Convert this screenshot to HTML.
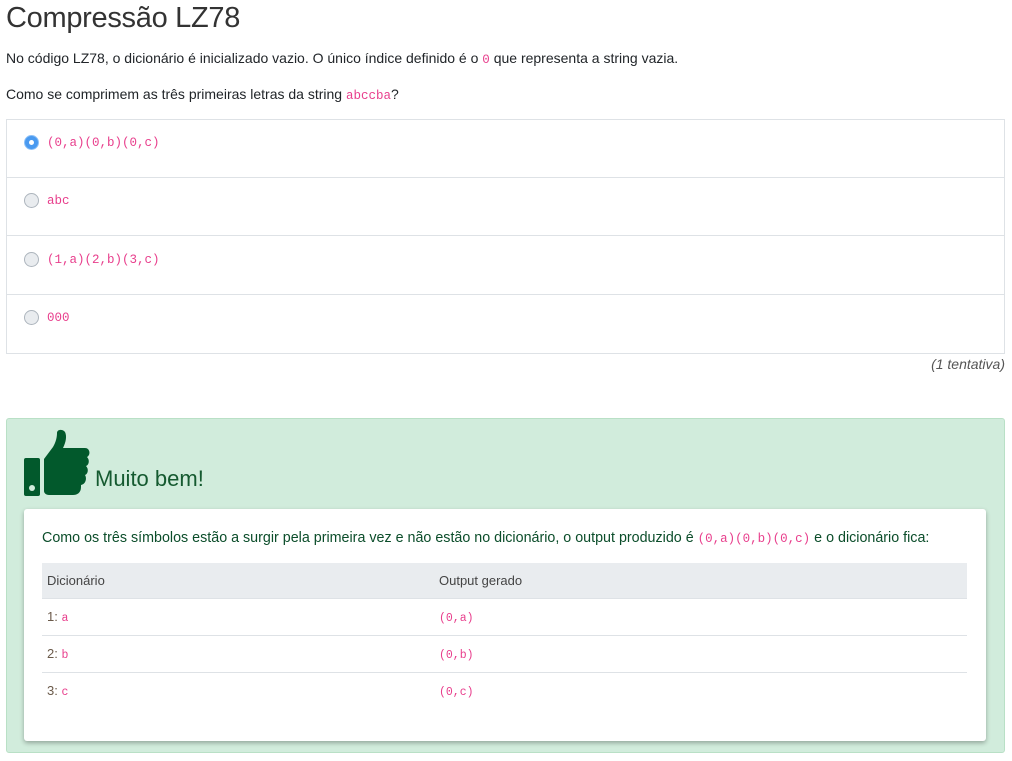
<!DOCTYPE html>
<html><head><meta charset="utf-8">
<style>
*{box-sizing:border-box;margin:0;padding:0}
body{width:1012px;height:761px;background:#fff;font-family:"Liberation Sans",sans-serif;color:#212529;font-size:14px;position:relative;overflow:hidden}
.a{position:absolute}
code{font-family:"Liberation Mono",monospace;color:#e83e8c;font-size:12.5px}
h1{position:absolute;left:6px;top:2px;font-weight:300;font-size:29px;color:#333;letter-spacing:-0.3px}
.opts{left:6px;top:119px;width:999px;height:235px;border:1px solid #dee2e6}
.row{position:absolute;left:0;width:100%;height:58px;border-bottom:1px solid #dee2e6}
.radio{position:absolute;left:17px;top:15px;width:15px;height:15px;border-radius:50%;background:#e9ecef;border:1px solid #adb5bd}
.sel{background:#4a9af0;border:1px solid #8cc0f7}
.sel::after{content:"";position:absolute;left:4px;top:4px;width:5px;height:5px;border-radius:50%;background:#fff}
.row code{position:absolute;left:40px;top:16px}
.green{left:6px;top:418px;width:999px;height:335px;background:#d1ecdc;border:1px solid #b9e0c6;border-radius:3px}
.card{left:24px;top:509px;width:962px;height:232px;background:#fff;border-radius:3px;box-shadow:0 2px 5px rgba(0,0,0,.3)}
table{position:absolute;left:18px;top:54px;width:925px;border-collapse:collapse;font-size:13px}
th{background:#e9ecef;font-weight:normal;text-align:left;color:#444;height:35px;padding-left:5px;border-bottom:1px solid #dee2e6}
td{height:37px;padding-left:5px;border-bottom:1px solid #dee2e6;color:#6b5a4a}
tr:last-child td{border-bottom:none}
td code{font-size:11.5px}
</style></head><body>
<h1>Compressão LZ78</h1>
<div class="a" style="left:6px;top:50px">No código LZ78, o dicionário é inicializado vazio. O único índice definido é o <code>0</code> que representa a string vazia.</div>
<div class="a" style="left:6px;top:86px">Como se comprimem as três primeiras letras da string <code>abccba</code>?</div>
<div class="a opts">
 <div class="row" style="top:0"><span class="radio sel"></span><code>(0,a)(0,b)(0,c)</code></div>
 <div class="row" style="top:58px"><span class="radio"></span><code>abc</code></div>
 <div class="row" style="top:117px"><span class="radio"></span><code>(1,a)(2,b)(3,c)</code></div>
 <div class="row" style="top:175px;border-bottom:none"><span class="radio"></span><code>000</code></div>
</div>
<div class="a" style="right:7px;top:356px;font-style:italic;color:#555">(1 tentativa)</div>
<div class="a green"></div>
<svg class="a" style="left:23px;top:429px" width="68" height="68" viewBox="0 0 68 68">
 <rect x="1" y="29" width="16" height="38" rx="2" fill="#02592c"/>
 <circle cx="9" cy="59" r="3" fill="#d1ecdc"/>
 <path d="M21 30 L30 18 C33 13 34 8 34 4 C34 0 40 0 42 3 C44 7 43 13 40 19 L62 19 C67 19 68 26 64 28 C67 31 66 36 63 37 C66 40 65 45 62 46 C64 49 63 55 58 56 L58 58 C58 64 54 66 50 66 L26 66 C23 66 21 64 21 62 Z" fill="#02592c"/>
</svg>
<div class="a" style="left:95px;top:466px;font-size:22px;font-weight:300;color:#155a30">Muito bem!</div>
<div class="a card">
 <div class="a" style="left:18px;top:21px;color:#0b4d2a;font-size:14.3px;white-space:nowrap">Como os três símbolos estão a surgir pela primeira vez e não estão no dicionário, o output produzido é <code>(0,a)(0,b)(0,c)</code> e o dicionário fica:</div>
 <table>
  <tr><th style="width:392px">Dicionário</th><th>Output gerado</th></tr>
  <tr><td>1: <code>a</code></td><td><code>(0,a)</code></td></tr>
  <tr><td>2: <code>b</code></td><td><code>(0,b)</code></td></tr>
  <tr><td>3: <code>c</code></td><td><code>(0,c)</code></td></tr>
 </table>
</div>
</body></html>
